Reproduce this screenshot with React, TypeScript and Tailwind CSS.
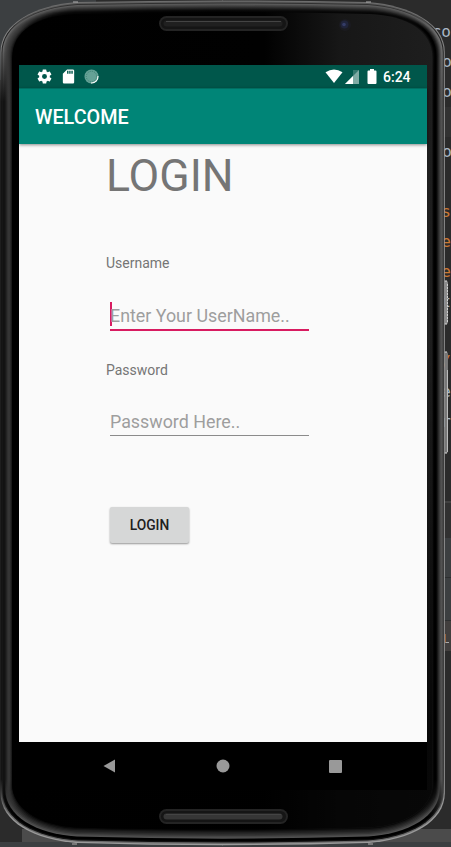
import React from "react";

// Corner and edge coordinates of the outer shell and of the glass inside it.
const SHELL = [0.5, 52, 24, 34, 5, 78, 2, 0.5, 444.8, 411, 367, 793, 822, 840, 843, 845.2];
const GLASS = [12, 58, 30, 38, 15.5, 75, 14, 12, 432.5, 406, 370, 784, 808, 825, 827.5, 829.5];

function contour(t: number) {
  const [l, y1, y2, x2, y3, x3, y4, top, r, x4, x5, y5, y6, y7, y8, bottom] = SHELL.map(
    (value, i) => +(value + (GLASS[i] - value) * t).toFixed(2),
  );
  return `M${l} ${y1} C${l} ${y2} ${x2} ${y3} ${x3} ${y4} Q150 ${top} 222 ${top} Q295 ${top} ${x5} ${y4} C${x4} ${y3} ${r} ${y2} ${r} ${y1} V${y5} C${r} ${y6} ${x4} ${y7} ${x5} ${y8} Q295 ${bottom} 222 ${bottom} Q150 ${bottom} ${x3} ${y8} C${x2} ${y7} ${l} ${y6} ${l} ${y5} Z`;
}

// Shades from the outside in: top left, left, top right, right, bottom, top.
const BANDS = [
  ["#858585", "#111111", "#858585", "#999999", "#999999", "#6e6e6e"],
  ["#222222", "#171717", "#252525", "#222222", "#6b6b6b", "#5a5a5a"],
  ["#686868", "#151515", "#707070", "#555555", "#111111", "#303030"],
  ["#585858", "#101010", "#606060", "#505050", "#000000", "#5c5c5c"],
  ["#4b4b4b", "#151515", "#4a4a4a", "#464646", "#000000", "#505050"],
  ["#454545", "#1c1c1c", "#353535", "#353535", "#505050", "#434343"],
  ["#3e3e3e", "#272727", "#202020", "#242424", "#454545", "#363636"],
  ["#393939", "#313131", "#101010", "#101010", "#363636", "#292929"],
  ["#333333", "#363636", "#000000", "#000000", "#2b2b2b", "#1c1c1c"],
  ["#2d2d2d", "#343434", "#000000", "#000000", "#202020", "#101010"],
  ["#222222", "#292929", "#050505", "#000000", "#151515", "#080808"],
  ["#151515", "#1b1b1b", "#101010", "#090909", "#090909", "#040404"],
];

function Side({ side }: { side: "left" | "right" }) {
  const topIndex = side === "left" ? 0 : 2;
  return (
    <g clipPath={`url(#${side}-half)`}>
      {BANDS.map((band, i) => (
        <g key={i}>
          <linearGradient id={`${side}-${i}`} gradientUnits="userSpaceOnUse" x1="0" x2="0" y1="0" y2="847">
            <stop offset="0.015" stopColor={band[5]} />
            <stop offset="0.035" stopColor={band[topIndex]} />
            <stop offset="0.06" stopColor={band[topIndex]} />
            <stop offset="0.12" stopColor={band[topIndex + 1]} />
            <stop offset="0.92" stopColor={band[topIndex + 1]} />
            <stop offset="0.965" stopColor={band[4]} />
          </linearGradient>
          <path d={contour(i / 12)} fill={`url(#${side}-${i})`} />
        </g>
      ))}
    </g>
  );
}

function Speaker({ y, core }: { y: number; core: string }) {
  return (
    <g>
      <rect x="159" y={y} width="129" height="15" rx="7.5" fill="#242424" />
      <rect x="161" y={y + 2} width="125" height="11" rx="5.5" fill="#151515" />
      <rect x="163.5" y={y + 4.5} width="119" height="6" rx="3" fill={core} />
      <path d={`M166 ${y + 5.5} H281`} stroke="#444" strokeWidth="1" />
    </g>
  );
}

function PhoneBody() {
  return (
    <svg className="absolute left-0 top-0" width="451" height="847" viewBox="0 0 451 847">
      <defs>
        <clipPath id="left-half"><rect width="223" height="847" /></clipPath>
        <clipPath id="right-half"><rect x="222" width="229" height="847" /></clipPath>
        <linearGradient id="face" x1="0" x2="1" y1="0" y2="0">
          <stop offset="0" stopColor="#000" />
          <stop offset="0.6" stopColor="#010101" />
          <stop offset="0.78" stopColor="#171717" />
          <stop offset="1" stopColor="#1e1e1e" />
        </linearGradient>
        <linearGradient id="fade" x1="0" x2="0" y1="0" y2="1">
          <stop offset="0.4" stopColor="#000" stopOpacity="0" />
          <stop offset="0.88" stopColor="#000" stopOpacity="0.75" />
        </linearGradient>
      </defs>
      <Side side="left" />
      <Side side="right" />
      <path d={contour(1)} fill="url(#face)" />
      <path d={contour(1)} fill="url(#fade)" />
      <path d="M73 2 H78 M366 2 H371" stroke="#aaa" strokeWidth="1.500" opacity=".7" />
      <path d="M72 844 H77 M368 844 H373" stroke="#777" strokeWidth="2" />
      <Speaker y={16} core="#202020" />
      <Speaker y={809} core="#363636" />
      <circle cx="345" cy="25" r="6" fill="#1b1b20" />
      <circle cx="344.5" cy="24.5" r="4" fill="#20243a" />
      <circle cx="344" cy="24.5" r="1.8" fill="#343c66" />
    </svg>
  );
}

const CODE = [
  { text: "co", style: "h-[30px]" },
  { text: "o", style: "h-[30px] -mr-px" },
  { text: "o", style: "h-[30px] -mr-px" },
  { text: "", style: "h-[30px] bg-[#323232]" },
  { text: "o", style: "h-[30px] -mr-px" },
  { text: "", style: "h-[30px]" },
  { text: "s", style: "h-[30px] text-[#cc7832]" },
  { text: "e", style: "h-[30px] text-[#cc7832]" },
  { text: "e", style: "h-[30px] text-[#cc7832]" },
  { text: "t", style: "h-[30px]" },
  { text: "", style: "h-[30px]" },
  { text: "/", style: "h-[30px] text-[#cc7832]" },
  { text: "e", style: "h-[30px]" },
  { text: "r", style: "h-[30px]" },
];

function EditorBehind() {
  return (
    <div className="absolute inset-0 flex flex-col bg-[#2b2b2b]">
      <div className="flex h-[829px] justify-between">
        <div className="h-20 w-24 bg-[#3c3f41]" />
        <div className="flex w-10 flex-col pt-[17px] font-['DejaVu_Sans_Mono',monospace] text-[16px] leading-[30px] text-[#a9b7c6]">
          {CODE.map((line, i) => (
            <div key={i} className={`flex shrink-0 justify-end ${line.style}`}>{line.text}</div>
          ))}
          <div className="mt-[64px] h-[37px] shrink-0 border-t-2 border-[#414141] bg-[#313131]" />
          <div className="h-10 shrink-0 border-b border-[#2d2f30] bg-[#3c3f41]" />
          <div className="h-[43px] shrink-0 border-b border-[#2d2f30] bg-[#3c3f41]" />
          <div className="flex h-[30px] shrink-0 justify-end bg-[#423f3e] pr-[2px] pt-[13px]">
            <div className="h-[9px] w-1 border-b border-l border-b-[#aaa] border-l-[#95613b]" />
          </div>
        </div>
      </div>
      <div className="ml-[22px] h-[13px] bg-[#4b4b4b]" />
      <div className="h-[5px] bg-[#3c3f41]" />
    </div>
  );
}

// Power and volume keys protruding from the right edge of the shell.
function SideKeys() {
  return (
    <svg className="absolute right-0 top-[280px]" width="8" height="175" viewBox="0 0 8 175">
      <path d="M1.500 1 H3.500 Q5 1 5 3 V42 Q5 44 3.500 44 H1.500Z" fill="#8c8c8c" />
      <path d="M4.500 4 V42" stroke="#d0d0d0" strokeDasharray="2 1" />
      <path d="M1.500 1 H4 M1.500 44 H4" stroke="#ddd" />
      <path d="M1.500 72 H3.500 Q5 72 5 74 V171 Q5 173 3.500 173 H1.500Z" fill="#777" />
      <path d="M4.500 90 V172" stroke="#bbb" />
      <path d="M1.500 72 H4 M1.500 173 H4" stroke="#ddd" />
    </svg>
  );
}

function StatusBar() {
  return (
    <div className="flex h-[23px] shrink-0 items-center bg-[#00574b] pl-[17px] pr-4 text-white">
      <svg width="17" height="17" viewBox="0 0 24 24" fill="currentColor">
        <path d="M19.430 12.980c.04-.32.07-.64.07-.98s-.03-.66-.07-.98l2.110-1.650c.19-.15.24-.42.12-.64l-2-3.460c-.12-.22-.39-.3-.61-.22l-2.490 1c-.52-.4-1.080-.73-1.690-.98l-.38-2.650A.488.488 0 0 0 14 2h-4c-.25 0-.46.18-.49.42l-.38 2.650c-.61.25-1.170.59-1.690.98l-2.490-1c-.23-.09-.49 0-.61.22l-2 3.460c-.13.22-.07.49.12.64l2.110 1.650c-.04.32-.07.65-.07.98s.03.66.07.98l-2.110 1.650c-.19.15-.24.42-.12.64l2 3.460c.12.22.39.3.61.22l2.490-1c.52.4 1.080.73 1.690.98l.38 2.650c.03.24.24.42.49.42h4c.25 0 .46-.18.49-.42l.38-2.650c.61-.25 1.170-.59 1.690-.98l2.490 1c.23.09.49 0 .61-.22l2-3.460c.12-.22.07-.49-.12-.64l-2.110-1.650zM12 15.500a3.500 3.500 0 1 1 0-7 3.500 3.500 0 0 1 0 7z" />
      </svg>
      <svg className="ml-[7px]" width="17" height="17" viewBox="0 0 24 24" fill="currentColor">
        <path d="M18 2h-8L4.020 8 4 20c0 1.100.9 2 2 2h12c1.100 0 2-.9 2-2V4c0-1.100-.9-2-2-2zm-6 6h-2V4h2v4zm3 0h-2V4h2v4zm3 0h-2V4h2v4z" />
      </svg>
      <svg className="ml-[7px]" width="15" height="15" viewBox="0 0 15 15">
        <circle cx="7.5" cy="7.5" r="7" fill="#65a196" />
        <circle cx="7.5" cy="7.5" r="5.2" fill="none" stroke="#37806f" strokeDasharray="1 1.2" strokeWidth="1" />
        <path d="M14 7 A6.500 6.500 0 0 1 7 14" fill="none" stroke="#fff" strokeWidth="1.1" />
      </svg>
      <svg className="ml-auto" width="18" height="15" viewBox="0 0 18 15" fill="currentColor">
        <path d="M0.500 3.300 Q9-2.200 17.500 3.300 L9 14 Z" />
      </svg>
      <svg className="ml-[2px]" width="14" height="14" viewBox="0 0 14 14" fill="currentColor">
        <path d="M0 14 14 0V14Z" opacity=".38" />
        <path d="M8 0H14V14H8Z" opacity=".2" />
        <path d="M0 14 8 6V14Z" />
      </svg>
      <svg className="ml-[8px]" width="10" height="15" viewBox="0 0 10 15" fill="currentColor">
        <path d="M3 0h4v1.500h1.500q1 0 1 1V14q0 1-1 1h-7q-1 0-1-1V2.500q0-1 1-1H3Z" />
      </svg>
      <span className="ml-[6px] w-[28px] whitespace-nowrap text-[14px] font-medium leading-none">6:24</span>
    </div>
  );
}

export default function App() {
  return (
    <div className="relative h-[847px] w-[451px] overflow-hidden font-[Roboto,sans-serif]">
      <EditorBehind />
      <SideKeys />
      <PhoneBody />
      <div className="relative ml-[19px] mt-[65px] flex h-[725px] w-[408px] flex-col bg-black">
        <StatusBar />
        <header className="z-10 flex h-14 shrink-0 items-center border-t border-[#006e61] bg-[#008577] pl-4 pt-[2px] text-[19.8px] font-medium text-white shadow-[0_1px_3px_rgba(0,0,0,0.45)]">
          WELCOME
        </header>
        <main className="flex h-[598px] flex-col items-start bg-[#fafafa] pl-[87px] text-[#757575]">
          <h1 className="mt-[6px] text-[44.6px] leading-[53px]">LOGIN</h1>
          <label className="mt-[52px] text-[14px] leading-4">Username</label>
          <div className="ml-1 mt-[31px] flex h-[29px] w-[199px] border-b-2 border-[#d81b60]">
            <span className="h-6 w-[2px] shrink-0 bg-[#d81b60]" />
            <span className="-ml-[2px] pt-[3px] text-[17.85px] leading-[22px] text-[#9e9e9e]">Enter Your UserName..</span>
          </div>
          <label className="mt-[31px] text-[14px] leading-4">Password</label>
          <div className="ml-1 mt-[32px] h-[26px] w-[199px] border-b border-[#8b8b8b] text-[17.85px] leading-[23px] text-[#9e9e9e]">
            Password Here..
          </div>
          <button className="ml-1 mt-[71px] h-[36px] w-[79px] rounded-[2px] bg-[#d6d7d7] pt-px text-[13.8px] font-medium text-[#202020] shadow-[0_1px_2px_rgba(0,0,0,0.4)]">
            LOGIN
          </button>
        </main>
        <nav className="flex h-12 items-center justify-between pl-[84px] pr-[85px]">
          <svg width="13" height="14" viewBox="0 0 13 14"><path d="M0.500 7 12 0.500V13.500Z" fill="#999" /></svg>
          <svg width="14" height="14" viewBox="0 0 14 14"><circle cx="7" cy="7" r="6.5" fill="#999" /></svg>
          <span className="h-[13px] w-[13px] rounded-[1px] bg-[#999]" />
        </nav>
      </div>
    </div>
  );
}
